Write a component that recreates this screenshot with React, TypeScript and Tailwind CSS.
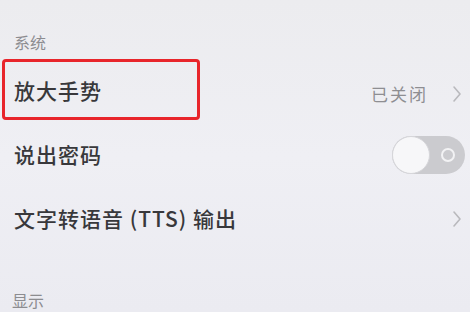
import React from 'react';

const cjk = { fontFamily: '"Noto Sans CJK SC", "Noto Sans", sans-serif' };

function Chevron() {
    return (
        <svg width="10" height="18" viewBox="0 0 10 18" className="shrink-0">
            <polyline points="2,2 8,9 2,16" fill="none" stroke="#b9b9bd" strokeWidth="1.6" strokeLinecap="round" strokeLinejoin="round" />
        </svg>
    );
}

function Toggle() {
    return (
        <div className="relative w-[73px] h-[38px] rounded-full bg-[#cbcbcf]">
            <div className="absolute left-0 top-0 w-[38px] h-[38px] rounded-full bg-[#f7f7f9] border border-[#d6d6da]" />
            <div className="absolute right-[10px] top-[12px] w-[14px] h-[14px] rounded-full border-2 border-[#f2f2f4]" />
        </div>
    );
}

export default function App() {
    return (
        <div className="w-[470px] h-[312px] overflow-hidden bg-gradient-to-b from-[#ececef] via-[#efeff4] to-[#ebebf1]" style={cjk}>
            {/* 系统 */}
            <div className="h-[59px] pt-[32px] pl-[14px]">
                <div className="text-[16px] leading-[20px] text-[#8c8c90]">系统</div>
            </div>

            <div className="relative h-[64px] flex items-center pl-[14px] pr-[8px]">
                <div className="text-[21px] font-medium text-[#38383b] tracking-[1px]">放大手势</div>
                <div className="ml-auto flex items-center gap-[24px] pt-[6px]">
                    <span className="text-[17px] text-[#8e8e92] tracking-[2px]">已关闭</span>
                    <Chevron />
                </div>
                {/* annotation box */}
                <div className="absolute left-[2px] top-0 w-[198px] h-[61px] border-[3px] border-[#e8252b] rounded-[4px]" />
            </div>

            <div className="h-[64px] flex items-center pl-[14px] pr-[5px]">
                <div className="text-[21px] font-medium text-[#38383b] tracking-[1px]">说出密码</div>
                <div className="ml-auto">
                    <Toggle />
                </div>
            </div>

            <div className="h-[64px] flex items-center pl-[14px] pr-[8px]">
                <div className="text-[21px] font-medium text-[#38383b] tracking-[1px]">文字转语音 (TTS) 输出</div>
                <div className="ml-auto">
                    <Chevron />
                </div>
            </div>

            {/* 显示 */}
            <div className="pt-[38px] pl-[12px]">
                <div className="text-[16px] leading-[22px] text-[#8c8c90]">显示</div>
            </div>
        </div>
    );
}
